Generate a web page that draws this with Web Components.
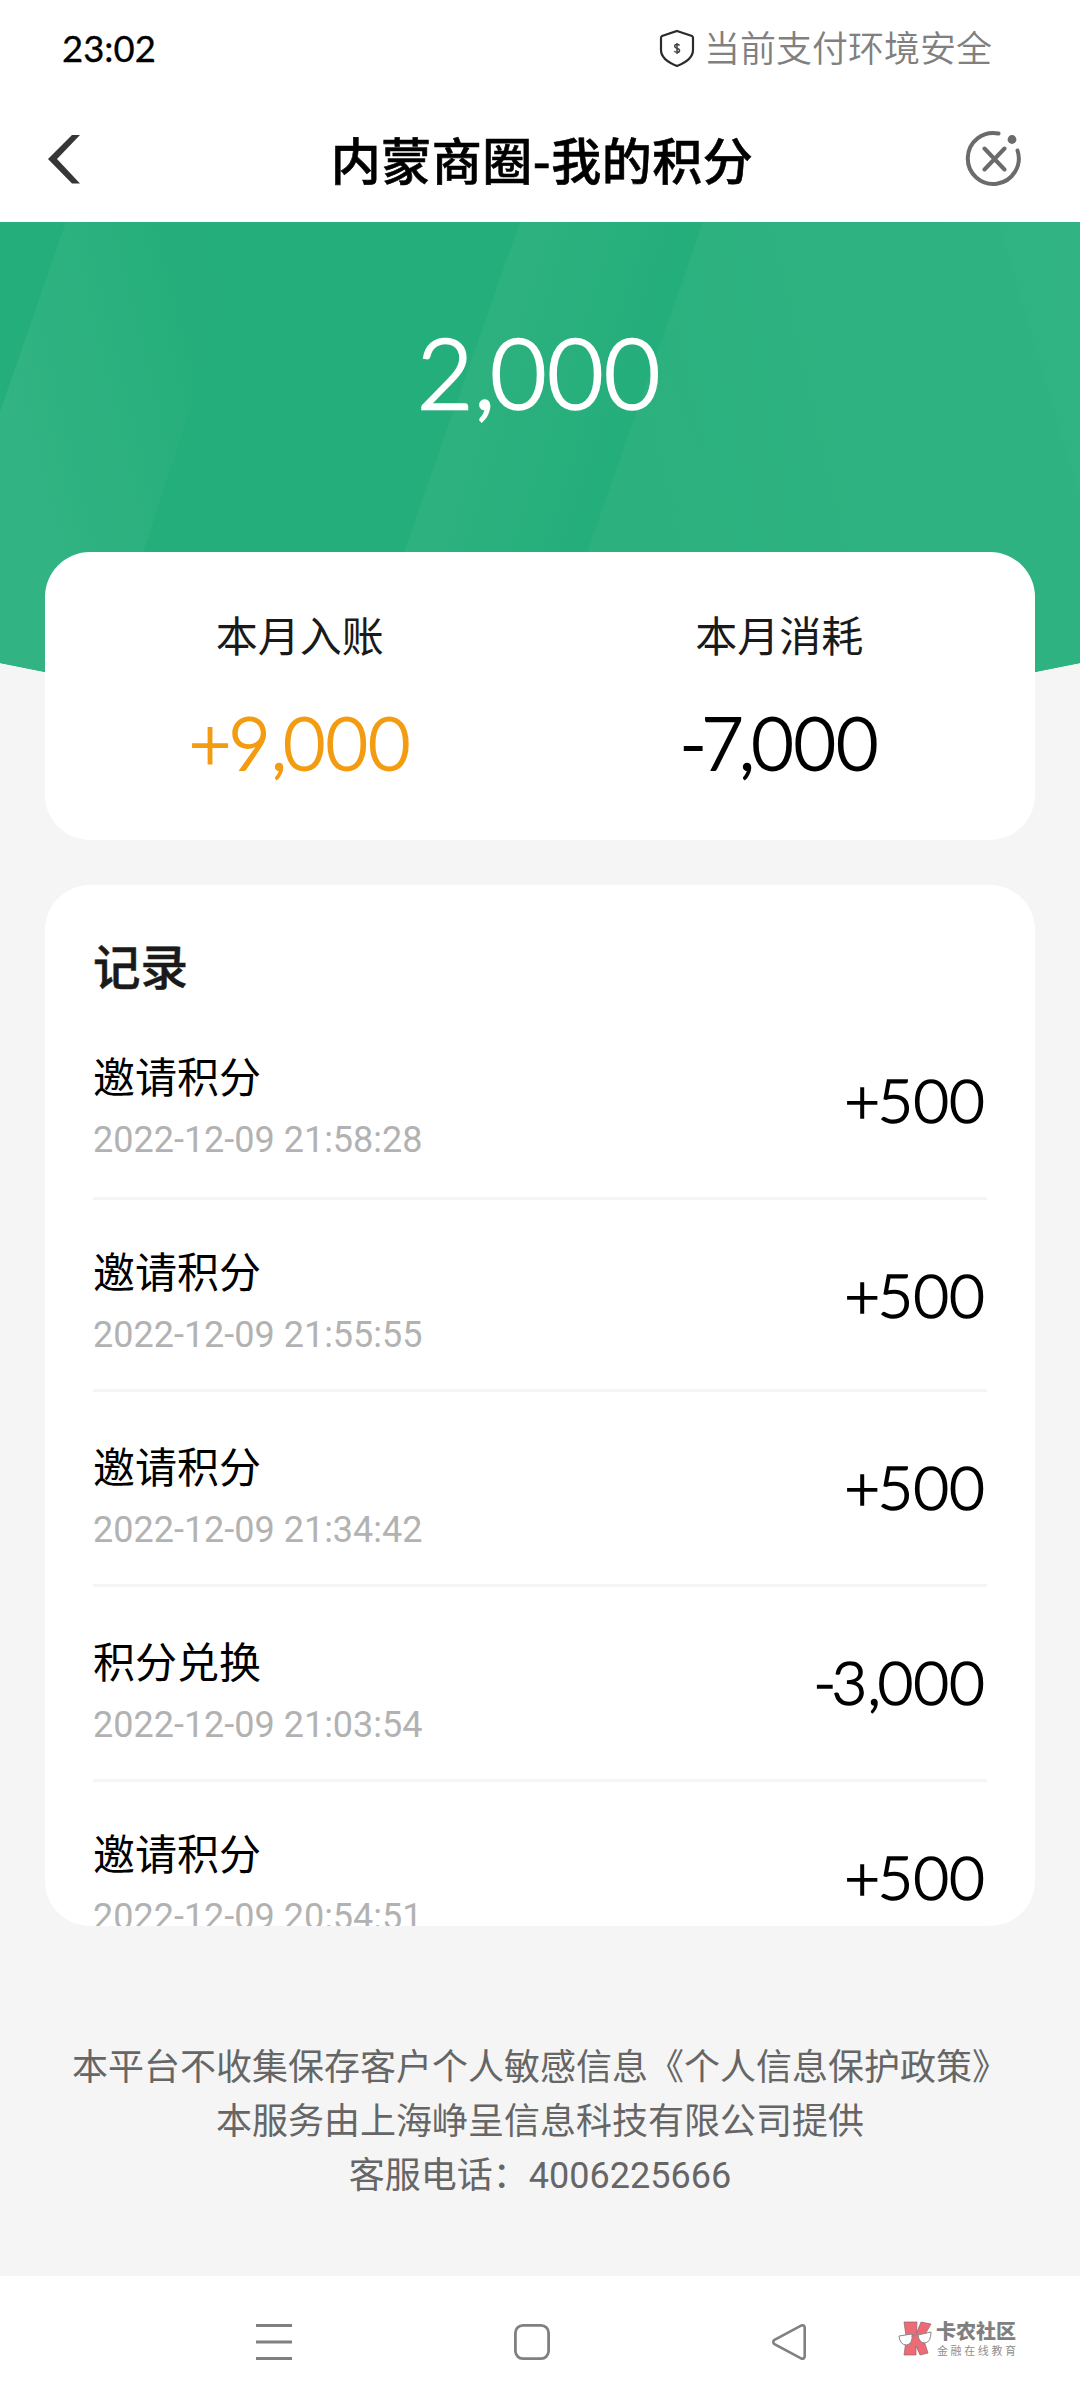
<!DOCTYPE html>
<html lang="zh-CN">
<head>
<meta charset="utf-8">
<title>内蒙商圈-我的积分</title>
<style>
html,body{margin:0;padding:0;background:#f5f5f5}
body{width:1080px;height:2408px;overflow:hidden;font-family:Roboto,"Noto Sans CJK SC",sans-serif;color:#000}
</style>
</head>
<body>
<points-page></points-page>
<script>
function define(name, html){
  const t=document.createElement('template');
  t.innerHTML=html;
  customElements.define(name, class extends HTMLElement{
    constructor(){
      super();
      this.attachShadow({mode:'open'}).append(t.content.cloneNode(true));
    }
  });
}

// Number with tightened sign and thousands separator: <num-text value="+9,000">
customElements.define('num-text', class extends HTMLElement{
  connectedCallback(){
    const root=this.shadowRoot||this.attachShadow({mode:'open'});
    const cls={',':'c','+':'p','-':'m','7':'s'};
    root.innerHTML=`<style>
:host{display:inline-block;white-space:nowrap;font-family:Lato,sans-serif;font-weight:300;-webkit-text-stroke:.027em currentColor;letter-spacing:.006em;font-kerning:none}
.c{letter-spacing:-.05em}.p{letter-spacing:-.035em}.m{letter-spacing:-.07em}.s{letter-spacing:-.06em}
</style>`+[...this.getAttribute('value')].map(ch=>cls[ch]?`<span class="${cls[ch]}">${ch}</span>`:ch).join('');
  }
});

define('status-bar', `
<style>
:host{display:flex;box-sizing:border-box;height:96px;padding:0 88px 0 62px;align-items:center;justify-content:space-between}
.time{font:400 36.500px/60px Lato,sans-serif;-webkit-text-stroke:.3px #000}
.safe{display:flex;align-items:center;font:350 36px/60px "Noto Sans CJK SC",sans-serif;color:#808080}
.time,.safe{height:60px}
.safe span{margin-top:-4px}
svg{width:36px;height:38px;margin-right:9px}
</style>
<div class="time">23:02</div>
<div class="safe">
<svg viewBox="0 0 36 38" fill="none" stroke="#2b2b2b" stroke-width="2.200"><path d="M18 2 L33 7 Q34 7.5 34 9 V21 C34 29 27 33.500 18 37 C9 33.500 2 29 2 21 V9 Q2 7.500 3 7 Z"/><path d="M20.500 16.500 C19.500 15 15.500 15.100 15.700 17.400 C16 19.700 20.600 18.800 20.600 21.500 C20.500 24 16.300 23.800 15.300 22 M18 14 V25" stroke-width="1.500" stroke="#444"/></svg>
<span>当前支付环境安全</span></div>`);

define('title-bar', `
<style>
:host{display:flex;box-sizing:border-box;height:126px;padding:0 55px 2px 46px;align-items:center;justify-content:space-between}
h1{margin:-1px 0 0 13px;font:500 50px/74px "Noto Sans CJK SC",sans-serif;letter-spacing:.5px;-webkit-text-stroke:.6px #000}
svg{display:block;width:60px;height:60px}
</style>
<svg viewBox="0 0 60 60"><path d="M34 7 H26 L2 31 L26 55.500 H34 L11 31 Z" fill="#363636"/></svg>
<h1><slot></slot></h1>
<svg viewBox="0 0 60 60" fill="none" stroke="#6b6b6b" stroke-width="4" stroke-linecap="round"><path d="M33.500 5.500 A25.500 25.500 0 1 0 52.500 22.500 M19.500 20.500 L39.500 41.500 M39.500 20.500 L19.500 41.500"/><circle cx="47" cy="11.500" r="4.400" fill="#6b6b6b" stroke="none"/></svg>`);

define('points-hero', `
<style>
:host{display:grid;height:330px}
svg,.sum{grid-area:1/1}
svg{display:block;width:1080px;height:450px}
.sum{font-size:97px;line-height:120px;color:#fff;text-align:center;padding:90px 2px 0 0}
</style>
<svg viewBox="0 0 1080 450" preserveAspectRatio="none">
<defs>
<linearGradient id="a" gradientUnits="userSpaceOnUse" x1="20" y1="220" x2="205" y2="175"><stop stop-color="#32b383"/><stop offset="1" stop-color="#25ae7b"/></linearGradient>
<linearGradient id="b" gradientUnits="userSpaceOnUse" x1="460" y1="160" x2="630" y2="215"><stop stop-color="#2db17f"/><stop offset="1" stop-color="#24ae7b"/></linearGradient>
<linearGradient id="c" gradientUnits="userSpaceOnUse" x1="640" y1="160" x2="1080" y2="60"><stop stop-color="#2ab07e"/><stop offset=".4" stop-color="#2eb281"/><stop offset="1" stop-color="#30b283"/></linearGradient>
<clipPath id="k"><path d="M0 0 H1080 V441 L1035 450 H45 L0 441 Z"/></clipPath>
</defs>
<g clip-path="url(#k)">
<path d="M0 0H1080V450H0Z" fill="#24ae7b"/>
<path d="M66 0 L0 190 V450 H104 L225 80 L205 0 Z" fill="url(#a)"/>
<path d="M520 0 L362 450 H545 L703 0 Z" fill="url(#b)"/>
<path d="M703 0 L545 450 H1080 V0 Z" fill="url(#c)"/>
<path d="M998 0 L1080 275 V0 Z" fill="#34b485" opacity=".35"/>
<path d="M660 125 L780 450 H545 Z" fill="#30b382" opacity=".2"/>
</g></svg>
<div class="sum"><slot></slot></div>`);

define('month-stat', `
<style>
:host{display:flex;flex:1;flex-direction:column;align-items:center}
.l{font:400 42px/60px "Noto Sans CJK SC",sans-serif;color:#1a1a1a}
.v{font-size:72.500px;line-height:90px;margin-top:33px;white-space:nowrap}
</style>
<div class="l"><slot name="label"></slot></div><div class="v"><slot></slot></div>`);

define('month-card', `
<style>
:host{display:flex;position:relative;box-sizing:border-box;height:288px;margin:0 45px;padding:52px 16px 0 15px;background:#fff;border-radius:45px}
</style><slot></slot>`);

define('record-row', `
<style>
:host{display:flex;box-sizing:border-box;height:195px;border-bottom:3px solid #f5f5f5;justify-content:space-between}
.txt{padding-top:40px}
.t{font:400 42px/60px "Noto Sans CJK SC",sans-serif;margin-top:-1px}
.d{font:400 36px/48px Roboto,sans-serif;color:#b2b2b2;margin-top:11px}
.n{font-size:61px;line-height:74px;padding-top:57px;margin-right:2px}
:host(.r1){height:194px}
:host(.r2){height:192px}
:host(.r2) .txt,:host(.r5) .txt{padding-top:41px}
:host(.r3) .txt,:host(.r4) .txt{padding-top:44px}
:host(.r2) .n,:host(.r3) .n,:host(.r4) .n,:host(.r5) .n{padding-top:58px}
</style>
<div class="txt"><div class="t"><slot></slot></div><div class="d"><slot name="date"></slot></div></div>
<div class="n"><slot name="amount"></slot></div>`);

define('record-card', `
<style>
:host{display:block;box-sizing:border-box;height:1041px;margin:45px 45px 0;padding:44px 48px 0;background:#fff;border-radius:45px;overflow:hidden}
h2{margin:0;font:500 47.500px/72px "Noto Sans CJK SC",sans-serif;color:#1a1a1a;height:77px;-webkit-text-stroke:.5px #1a1a1a}
</style><h2><slot name="heading"></slot></h2><slot></slot>`);

define('page-note', `
<style>
:host{display:block;padding-top:115px;height:235px;font:400 36px/54px Roboto,"Noto Sans CJK SC",sans-serif;color:#666;text-align:center;white-space:nowrap}
</style><slot></slot>`);

define('brand-mark', `
<style>
:host{display:flex;align-items:center;gap:4px;color:#808080}
svg{width:34px;height:36px;margin-top:-7px}
.txt{margin-top:-7px}
.a{font:900 20px/22px "Noto Sans CJK SC",sans-serif}
.b{font:400 11px/16px "Noto Sans CJK SC",sans-serif;letter-spacing:2.600px;padding-left:1px;color:#8f8f8f}
</style>
<svg viewBox="0 0 34 36"><path d="M6 1 L19 1 L18.500 12 L23 1 L33 3 L25 17 L30 32 L22 34 L18 25 L18 34 L6 34 L7 27 L8 15 Z" fill="#ed6b76" stroke="#95606a" stroke-width=".7"/><path d="M1 15 L14 13 Q15 23 8.500 24 Q2 24 1 15 Z M20 14 L33 11 Q33 21 27 22 Q21 22 20 14 Z" fill="#fff" stroke="#888" stroke-width="1"/><path d="M14 14 L20 14" stroke="#888"/></svg>
<div class="txt"><div class="a"><slot></slot></div><div class="b"><slot name="sub"></slot></div></div>`);

define('nav-bar', `
<style>
:host{display:flex;box-sizing:border-box;height:132px;padding:0 58px 0 254px;align-items:center;background:#fff}
svg{display:block;width:40px;height:40px;margin-right:218px;flex:none}
svg.last{margin-right:88px}
</style>
<svg viewBox="0 0 40 40" stroke="#808080" stroke-width="3"><path d="M2 3.500H38M2 20H38M2 36.500H38"/></svg>
<svg viewBox="0 0 40 40" fill="none" stroke="#808080" stroke-width="2.800"><rect x="3.400" y="3.400" width="33.200" height="33.200" rx="7.500"/></svg>
<svg class="last" viewBox="0 0 40 40" fill="none" stroke="#808080" stroke-width="2.600"><path d="M4.500 17.800 L31 3.600 Q34.700 2.500 34.700 6 V34 Q34.700 37.500 31 36.400 L4.500 22.200 Q2 20 4.500 17.800 Z"/></svg>
<slot></slot>`);

define('points-page', `
<style>
:host{display:flex;flex-direction:column;width:1080px;height:2408px;background:#f5f5f5}
header{background:#fff;height:222px;flex:none}
.in{color:#f39c12}
</style>
<header><status-bar></status-bar><title-bar>内蒙商圈-我的积分</title-bar></header>
<points-hero><num-text value="2,000"></num-text></points-hero>
<month-card>
<month-stat><span slot="label">本月入账</span><num-text class="in" value="+9,000"></num-text></month-stat>
<month-stat><span slot="label">本月消耗</span><num-text value="-7,000"></num-text></month-stat>
</month-card>
<record-card><span slot="heading">记录</span>
<record-row class="r1">邀请积分<span slot="date">2022-12-09 21:58:28</span><num-text slot="amount" value="+500"></num-text></record-row>
<record-row class="r2">邀请积分<span slot="date">2022-12-09 21:55:55</span><num-text slot="amount" value="+500"></num-text></record-row>
<record-row class="r3">邀请积分<span slot="date">2022-12-09 21:34:42</span><num-text slot="amount" value="+500"></num-text></record-row>
<record-row class="r4">积分兑换<span slot="date">2022-12-09 21:03:54</span><num-text slot="amount" value="-3,000"></num-text></record-row>
<record-row class="r5">邀请积分<span slot="date">2022-12-09 20:54:51</span><num-text slot="amount" value="+500"></num-text></record-row>
</record-card>
<page-note>本平台不收集保存客户个人敏感信息《个人信息保护政策》<br>本服务由上海峥呈信息科技有限公司提供<br>客服电话：4006225666</page-note>
<nav-bar><brand-mark>卡农社区<span slot="sub">金融在线教育</span></brand-mark></nav-bar>`);
</script>
</body>
</html>
